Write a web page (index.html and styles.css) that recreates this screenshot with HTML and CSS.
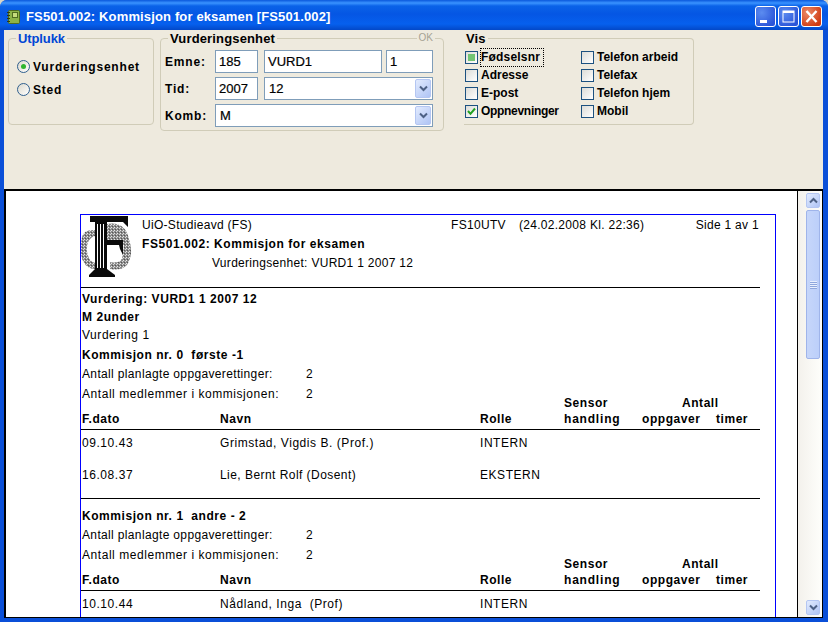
FILE: index.html
```html
<!DOCTYPE html>
<html lang="no">
<head>
<meta charset="utf-8">
<title>FS501.002</title>
<link rel="stylesheet" href="styles.css">
</head>
<body>
<div class="window">
  <header class="titlebar">
    <svg class="app-icon" width="13" height="14" viewBox="0 0 13 14"><rect x="1.5" y="0.5" width="11" height="13" rx="1" fill="#8db347" stroke="#4f6b20"/><rect x="0" y="2" width="3" height="1" fill="#2d3a14"/><rect x="0" y="5" width="3" height="1" fill="#2d3a14"/><rect x="0" y="8" width="3" height="1" fill="#2d3a14"/><rect x="0" y="11" width="3" height="1" fill="#2d3a14"/><rect x="5.5" y="2.5" width="5" height="5" fill="#c7dc7c" stroke="#4f6b20" stroke-width="1"/></svg>
    <span class="title-text">FS501.002: Kommisjon for eksamen [FS501.002]</span>
    <div class="win-buttons">
      <div class="win-btn"><svg width="21" height="21" viewBox="0 0 21 21"><rect x="5" y="14" width="7" height="3" fill="#fff"/></svg></div>
      <div class="win-btn"><svg width="21" height="21" viewBox="0 0 21 21"><rect x="5" y="5" width="11" height="11" fill="none" stroke="#fff" stroke-width="1"/><rect x="5" y="5" width="11" height="2" fill="#fff"/></svg></div>
      <div class="win-btn win-close"><svg width="21" height="21" viewBox="0 0 21 21"><path d="M5.5 5 L15.5 16 M15.5 5 L5.5 16" stroke="#fff" stroke-width="2.4" fill="none"/></svg></div>
    </div>
  </header>
  <div class="client">
    <section class="toolbar">
      <div class="group group-utplukk">
        <span class="legend legend-blue">Utplukk</span>
        <label class="radio-row"><span class="radio radio-on"></span>Vurderingsenhet</label>
        <label class="radio-row"><span class="radio"></span>Sted</label>
      </div>
      <div class="group group-vurd">
        <span class="legend">Vurderingsenhet</span>
        <span class="ok-label">OK</span>
        <div class="field-row">
          <span class="field-label">Emne:</span>
          <div class="box w-43">185</div>
          <div class="box w-118 gap-6">VURD1</div>
          <div class="box w-47 gap-4">1</div>
        </div>
        <div class="field-row">
          <span class="field-label">Tid:</span>
          <div class="box w-43">2007</div>
          <div class="box combo w-169 gap-6">12<span class="combo-btn"><svg width="9" height="7" viewBox="0 0 9 7"><path d="M1 1.5 L4.5 5 L8 1.5" fill="none" stroke="#4d6185" stroke-width="2"/></svg></span></div>
        </div>
        <div class="field-row">
          <span class="field-label">Komb:</span>
          <div class="box combo w-218">M<span class="combo-btn"><svg width="9" height="7" viewBox="0 0 9 7"><path d="M1 1.5 L4.5 5 L8 1.5" fill="none" stroke="#4d6185" stroke-width="2"/></svg></span></div>
        </div>
      </div>
      <div class="group group-vis">
        <span class="legend">Vis</span>
        <div class="check-grid">
          <label class="check-row"><span class="check check-focus"></span><span class="focus-label">Fødselsnr</span></label>
          <label class="check-row"><span class="check"></span>Telefon arbeid</label>
          <label class="check-row"><span class="check"></span>Adresse</label>
          <label class="check-row"><span class="check"></span>Telefax</label>
          <label class="check-row"><span class="check"></span>E-post</label>
          <label class="check-row"><span class="check"></span>Telefon hjem</label>
          <label class="check-row tight"><span class="check"><svg width="11" height="11" viewBox="0 0 11 11"><path d="M2 5 L4.5 7.8 L9 2.5" fill="none" stroke="#21a121" stroke-width="2"/></svg></span>Oppnevninger</label>
          <label class="check-row"><span class="check"></span>Mobil</label>
        </div>
      </div>
    </section>
    <section class="preview">
      <div class="page-area">
        <article class="report">
          <div class="report-head">
            <svg class="logo" width="52" height="63" viewBox="0 0 52 63">
              <defs>
                <pattern id="stipple" width="3" height="3" patternUnits="userSpaceOnUse">
                  <rect width="3" height="3" fill="#8c8c8c"/>
                  <rect x="0" y="0" width="1" height="1" fill="#e8e8e8"/>
                  <rect x="2" y="1" width="1" height="1" fill="#d8d8d8"/>
                  <rect x="1" y="2" width="1" height="1" fill="#555"/>
                </pattern>
              </defs>
              <path d="M14 15 Q3 14 1 22 Q-2 38 2 46 Q6 54 14 54 L14 48 Q7 46 6 36 Q5 24 14 21 Z" fill="url(#stipple)"/>
              <path d="M26 9 Q44 6 48 24 Q53 40 46 50 Q40 56 29 54 L29 47 Q37 49 41 44 L43 30 L26 25 Z" fill="url(#stipple)"/>
              <path d="M9 1 H47 V12 L42 7 H9 Z" fill="#0a0a0a"/>
              <rect x="14" y="7" width="12" height="48" fill="#0a0a0a"/>
              <rect x="16" y="9" width="1" height="44" fill="#fff"/>
              <rect x="19" y="9" width="1" height="44" fill="#fff"/>
              <rect x="22" y="9" width="1" height="44" fill="#fff"/>
              <path d="M26 25 H42 V40 L39 34 L38 30 H26 Z" fill="#0a0a0a"/>
              <path d="M14 54 H26 L34 60 V62 H8 V60 Z" fill="#0a0a0a"/>
            </svg>
            <div class="head-text">
              <div class="head-top">
                <span class="head-org">UiO-Studieavd (FS)</span>
                <span class="head-code">FS10UTV</span>
                <span class="head-date">(24.02.2008 Kl. 22:36)</span>
                <span class="head-page">Side 1 av 1</span>
              </div>
              <div class="head-title">FS501.002: Kommisjon for eksamen</div>
              <div class="head-sub">Vurderingsenhet: VURD1 1 2007 12</div>
            </div>
          </div>
          <hr class="rule">
          <div class="line strong m-2">Vurdering: VURD1 1 2007 12</div>
          <div class="line strong m-2">M 2under</div>
          <div class="line m-2">Vurdering 1</div>
          <div class="line strong m-4">Kommisjon nr. 0  første -1</div>
          <div class="line kv m-3"><span class="narrow">Antall planlagte oppgaverettinger:</span><span>2</span></div>
          <div class="line kv m-4"><span>Antall medlemmer i kommisjonen:</span><span>2</span></div>
          <div class="cols col-head strong pull-6"><span></span><span></span><span></span><span>Sensor</span><span class="cell-antall">Antall</span><span></span></div>
          <div class="cols col-head strong"><span>F.dato</span><span>Navn</span><span>Rolle</span><span class="wide-head">handling</span><span>oppgaver</span><span>timer</span></div>
          <hr class="rule rule-t">
          <div class="cols m-4"><span>09.10.43</span><span>Grimstad, Vigdis B. (Prof.)</span><span>INTERN</span></div>
          <div class="cols m-16"><span>16.08.37</span><span class="mid">Lie, Bernt Rolf (Dosent)</span><span>EKSTERN</span></div>
          <hr class="rule rule-s">
          <div class="line strong m-8">Kommisjon nr. 1  andre - 2</div>
          <div class="line kv m-3"><span class="narrow">Antall planlagte oppgaverettinger:</span><span>2</span></div>
          <div class="line kv m-4"><span>Antall medlemmer i kommisjonen:</span><span>2</span></div>
          <div class="cols col-head strong pull-6"><span></span><span></span><span></span><span>Sensor</span><span class="cell-antall">Antall</span><span></span></div>
          <div class="cols col-head strong"><span>F.dato</span><span>Navn</span><span>Rolle</span><span class="wide-head">handling</span><span>oppgaver</span><span>timer</span></div>
          <hr class="rule rule-t">
          <div class="cols m-4"><span>10.10.44</span><span>Nådland, Inga  (Prof)</span><span>INTERN</span></div>
        </article>
      </div>
      <aside class="scrollbar">
        <div class="sb-btn"><svg width="9" height="7" viewBox="0 0 9 7"><path d="M1 5.5 L4.5 2 L8 5.5" fill="none" stroke="#4d6185" stroke-width="2"/></svg></div>
        <div class="sb-thumb"><span class="grip"></span></div>
        <div class="sb-spacer"></div>
        <div class="sb-btn"><svg width="9" height="7" viewBox="0 0 9 7"><path d="M1 1.5 L4.5 5 L8 1.5" fill="none" stroke="#4d6185" stroke-width="2"/></svg></div>
      </aside>
    </section>
  </div>
</div>
</body>
</html>
```
FILE: styles.css
```css
* { box-sizing: border-box; }
html, body { margin: 0; padding: 0; }
body { width: 828px; height: 622px; overflow: hidden; background: #d8d5c8; font-family: "Liberation Sans", Arial, sans-serif; font-size: 12px; color: #000; }
.window { width: 828px; height: 622px; display: flex; flex-direction: column; background: #0a4fd8; border-radius: 7px 7px 0 0; overflow: hidden; }
.titlebar { height: 30px; flex: none; display: flex; align-items: center; padding: 3px 6px 0 7px; background: linear-gradient(#0a58dc 0, #3a93ff 3px, #0a62e8 6px, #0556e4 14px, #0660ee 24px, #0348c8 30px); }
.app-icon { flex: none; }
.title-text { margin-left: 6px; color: #fff; font-weight: 700; font-size: 13px; letter-spacing: 0.14px; }
.win-buttons { margin-left: auto; display: flex; gap: 2px; margin-top: -1px; }
.win-btn { width: 21px; height: 21px; border: 1px solid #fff; border-radius: 3px; background: radial-gradient(circle at 30% 30%, #5c8cf0, #2a55d8 80%); display: flex; align-items: center; justify-content: center; }
.win-btn svg { margin: -1px; }
.win-close { background: radial-gradient(circle at 30% 30%, #ec8a68, #cf3a12 80%); }
.client { flex: 1; min-height: 0; margin: 0 5px 4px 4px; display: flex; flex-direction: column; background: #eeeade; }
.toolbar { height: 159px; flex: none; display: flex; align-items: flex-start; padding: 8px 0 0 4px; font-weight: 700; letter-spacing: 0.8px; }
.group { position: relative; border: 1px solid #d0ccb8; border-radius: 4px; }
.legend { position: absolute; top: -8px; left: 7px; padding: 0 2px; background: #eeeade; font-size: 13px; line-height: 15px; letter-spacing: 0.15px; }
.legend-blue { color: #0046d5; letter-spacing: -0.1px; }
.group-utplukk { width: 146px; height: 87px; padding: 16px 0 0 8px; }
.radio-row { display: flex; align-items: center; height: 23px; gap: 3px; }
.radio { width: 13px; height: 13px; border-radius: 50%; border: 1px solid #2f5f8f; background: linear-gradient(135deg, #dcd9cc, #fff); display: flex; align-items: center; justify-content: center; }
.radio-on::after { content: ""; width: 5px; height: 5px; border-radius: 50%; background: #2fb52f; }
.group-vurd { width: 284px; height: 93px; margin-left: 6px; padding: 11px 0 0 4px; }
.ok-label { position: absolute; top: -7px; right: 8px; padding: 0 2px; background: #eeeade; color: #a5a294; font-weight: 400; font-size: 10px; line-height: 12px; letter-spacing: 0; }
.field-row { display: flex; align-items: center; height: 23px; margin-bottom: 4px; }
.field-label { width: 50px; flex: none; }
.box { height: 23px; flex: none; position: relative; background: #fff; border: 1px solid #7f9db9; padding-left: 3px; display: flex; align-items: center; font-size: 13px; font-weight: 400; letter-spacing: 0; -webkit-text-stroke: 0.2px #000; }
.w-43 { width: 43px; }
.w-47 { width: 47px; }
.w-118 { width: 118px; }
.w-169 { width: 169px; }
.w-218 { width: 218px; }
.gap-6 { margin-left: 6px; }
.gap-4 { margin-left: 4px; }
.combo { padding-left: 4px; }
.combo-btn { position: absolute; top: 1px; right: 1px; bottom: 1px; width: 16px; border: 1px solid #b4c6f2; border-radius: 2px; background: linear-gradient(135deg, #e2ebfe, #afc4f5); display: flex; align-items: center; justify-content: center; }
.group-vis { width: 230px; height: 87px; margin-left: 20px; padding: 9px 0 0 1px; border-left: none; border-top-left-radius: 0; border-bottom-left-radius: 0; letter-spacing: 0; }
.group-vis .legend { left: 0; }
.check-grid { display: grid; grid-template-columns: 116px 1fr; grid-auto-rows: 18px; }
.check-row { display: flex; align-items: center; gap: 3px; }
.tight { letter-spacing: -0.3px; }
.check { flex: none; width: 13px; height: 13px; border: 1px solid #1c5180; background: linear-gradient(135deg, #dcdcd7, #fff); display: flex; align-items: center; justify-content: center; }
.check-focus::after { content: ""; width: 7px; height: 7px; background: #73c573; }
.focus-label { border: 1px dotted #000; margin: 0 0 0 -1px; padding: 0 3px 1px 0; line-height: 16px; letter-spacing: 0.2px; }
.preview { flex: 1; min-height: 0; display: flex; border-top: 2px solid #000; border-left: 2px solid #000; border-right: 1px solid #000; border-bottom: 1px solid #000; }
.page-area { flex: 1; min-width: 0; overflow: hidden; background: #fff; border-right: 1px solid #000; padding: 23px 0 0 74px; }
.report { width: 696px; height: 420px; border: 1px solid #00f; border-bottom: none; overflow: hidden; letter-spacing: 0.55px; }
.report-head { height: 72px; display: flex; }
.logo { flex: none; width: 52px; height: 63px; }
.head-text { flex: 1; margin-left: 9px; padding-right: 16px; }
.head-top { display: flex; line-height: 18px; margin-top: 1px; letter-spacing: 0.3px; }
.head-code { margin-left: 199px; }
.head-date { margin-left: 13px; }
.head-page { margin-left: auto; }
.head-title { font-weight: 700; line-height: 20px; margin-top: 0; }
.head-sub { margin: 1px 0 0 70px; line-height: 16px; letter-spacing: 0.3px; }
.rule { height: 1px; margin: 0 15px 0 0; border: 0; background: #000; }
.rule-t { margin-top: 2px; }
.rule-s { margin-top: 16px; }
.line, .cols { line-height: 16px; height: 16px; padding: 1px 0 0 1px; white-space: pre; }
.strong { font-weight: 700; }
.kv { display: grid; grid-template-columns: 224px 1fr; }
.cols { display: grid; grid-template-columns: 138px 260px 84px 78px 74px 1fr; }
.col-head { padding-top: 0; }
.cell-antall { padding-left: 40px; }
.narrow { letter-spacing: 0.35px; }
.mid { letter-spacing: 0.45px; }
.wide-head { letter-spacing: 0.8px; }
.pull-6 { margin-top: -6px; }
.m-2 { margin-top: 2px; }
.m-3 { margin-top: 3px; }
.m-4 { margin-top: 4px; }
.m-8 { margin-top: 8px; }
.m-16 { margin-top: 16px; }
.scrollbar { width: 24px; flex: none; display: flex; flex-direction: column; padding: 2px 2px 2px 8px; background: linear-gradient(90deg, #f3f1ec, #fefefb); }
.sb-btn { height: 15px; flex: none; border: 1px solid #b4c6f2; border-radius: 2px; background: linear-gradient(135deg, #e2ebfe, #afc4f5); display: flex; align-items: center; justify-content: center; }
.sb-thumb { height: 149px; flex: none; margin-top: 2px; border: 1px solid #9fb4ea; border-radius: 2px; background: linear-gradient(90deg, #c6d6fa, #bccffa); display: flex; align-items: center; justify-content: center; }
.grip { width: 7px; height: 8px; background: repeating-linear-gradient(#e8effe 0 1px, #8ea6dc 1px 2px); }
.sb-spacer { flex: 1; }
```
